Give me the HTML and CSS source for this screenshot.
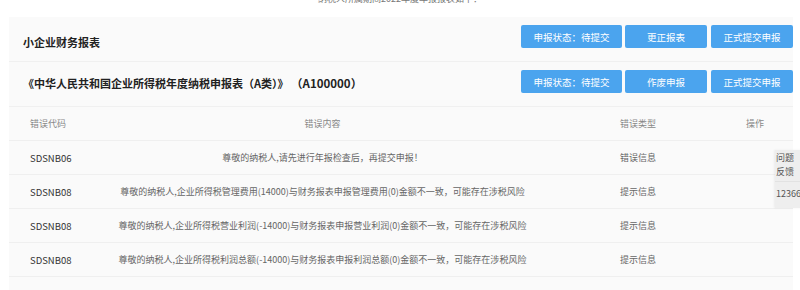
FILE: index.html
```html
<!DOCTYPE html>
<html lang="zh">
<head>
<meta charset="utf-8">
<link rel="stylesheet" href="styles.css">
</head>
<body>
<div class="top-note"><span>纳税人所属期间2022年度年报报表如下：</span></div>
<div class="panel">
  <div class="section first">
    <div class="section-title">小企业财务报表</div>
    <div class="actions">
      <button class="btn w1">申报状态：待提交</button>
      <button class="btn w2">更正报表</button>
      <button class="btn w3">正式提交申报</button>
    </div>
  </div>
  <div class="section second">
    <div class="section-title">《中华人民共和国企业所得税年度纳税申报表（A类）》 <span class="code-tag">（A100000）</span></div>
    <div class="actions">
      <button class="btn w1">申报状态：待提交</button>
      <button class="btn w2">作废申报</button>
      <button class="btn w3">正式提交申报</button>
    </div>
  </div>
  <div class="table">
    <div class="row head">
      <div class="c1">错误代码</div>
      <div class="c2">错误内容</div>
      <div class="c3">错误类型</div>
      <div class="c4">操作</div>
    </div>
    <div class="row">
      <div class="c1 code">SDSNB06</div>
      <div class="c2">尊敬的纳税人,请先进行年报检查后，再提交申报！</div>
      <div class="c3">错误信息</div>
      <div class="c4"></div>
    </div>
    <div class="row">
      <div class="c1 code">SDSNB08</div>
      <div class="c2">尊敬的纳税人,企业所得税管理费用(14000)与财务报表申报管理费用(0)金额不一致，可能存在涉税风险</div>
      <div class="c3">提示信息</div>
      <div class="c4"></div>
    </div>
    <div class="row">
      <div class="c1 code">SDSNB08</div>
      <div class="c2">尊敬的纳税人,企业所得税营业利润(-14000)与财务报表申报营业利润(0)金额不一致，可能存在涉税风险</div>
      <div class="c3">提示信息</div>
      <div class="c4"></div>
    </div>
    <div class="row">
      <div class="c1 code">SDSNB08</div>
      <div class="c2">尊敬的纳税人,企业所得税利润总额(-14000)与财务报表申报利润总额(0)金额不一致，可能存在涉税风险</div>
      <div class="c3">提示信息</div>
      <div class="c4"></div>
    </div>
  </div>
</div>
<div class="feedback">
  <div class="fb-top">问题<br>反馈</div>
  <div class="fb-num">12366</div>
</div>
</body>
</html>
```
FILE: styles.css
```css
* { box-sizing: border-box; }
html, body { margin: 0; padding: 0; background: #fff; }
body {
  font-family: "Noto Sans CJK SC", "Noto Sans", sans-serif;
  color: #333;
  width: 800px;
  height: 290px;
  overflow: hidden;
  position: relative;
}
.top-note {
  height: 17px;
  text-align: center;
  font-size: 9px;
  color: #777;
  overflow: hidden;
}
.top-note span {
  display: block;
  margin-top: -7px;
  line-height: 12px;
}
.panel {
  margin: 0 7px 0 9px;
  background: #fafafa;
  height: 273px;
}
.section {
  height: 45px;
  display: flex;
  justify-content: space-between;
  align-items: flex-start;
  border-bottom: 1px solid #f0f0f0;
  padding: 8px 0 0 14px;
}
.section-title {
  font-size: 11px;
  font-weight: bold;
  color: #222;
  line-height: 14px;
}
.code-tag { font-size: 11.5px; }
.first .section-title { margin-top: 10px; }
.second .section-title { margin-top: 6px; }
.actions {
  display: flex;
}
.btn {
  height: 23px;
  border: none;
  border-radius: 2px;
  background: #4ba4ee;
  color: #fff;
  font-family: inherit;
  font-size: 9.5px;
  padding: 0;
}
.btn.w1 { width: 101px; }
.btn.w2 { width: 82px; margin-left: 3px; }
.btn.w3 { width: 82px; margin-left: 4px; }
.table { font-size: 9px; }
.row {
  display: grid;
  grid-template-columns: 91px 445px 172px 1fr;
  height: 34px;
  align-items: center;
  border-bottom: 1px solid #efefef;
  color: #666;
}
.row.head { color: #888; }
.c1 { padding-left: 21px; }
.c2 { text-align: center; white-space: nowrap; }
.c3 { padding-left: 75px; }
.c4 { text-align: center; }
.code { color: #333; font-size: 9.5px; }
.feedback {
  position: absolute;
  left: 775px;
  top: 150px;
  width: 32px;
  height: 58px;
  background: #eeeeee;
  font-size: 9px;
  color: #555;
  box-shadow: -1px 0 2px rgba(0,0,0,0.06);
}
.fb-top {
  padding: 1px 0 0 1px;
  line-height: 14px;
  border-bottom: 1px solid #e2e2e2;
  height: 32px;
}
.fb-num {
  padding: 5px 0 0 1px;
}
```
